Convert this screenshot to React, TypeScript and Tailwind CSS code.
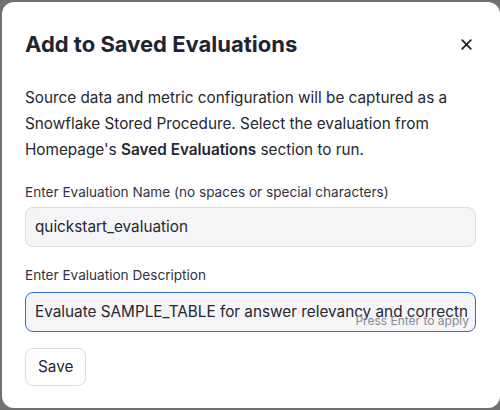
import React from "react";

export default function App() {
  return (
    <div className="w-[500px] h-[410px] bg-[#707070] overflow-hidden pt-[2px] pl-[2px]" style={{ fontFamily: "Inter, 'Noto Sans', sans-serif" }}>
      <div className="w-[498px] h-[406px] bg-white rounded-[12px] px-[23px] pt-[26px] text-[#262730]">
        <div className="flex items-center justify-between">
          <h2 className="text-[22px] font-bold text-[#1f2430] leading-[32px]">Add to Saved Evaluations</h2>
          <svg width="11" height="11" viewBox="0 0 11 11" className="mr-[5px]">
            <path d="M1.2 1.2 L9.8 9.8 M9.8 1.2 L1.2 9.8" stroke="#1f2430" strokeWidth="1.8" strokeLinecap="round" />
          </svg>
        </div>
        <p className="mt-[25px] text-[15.3px] leading-[26px] text-[#262730]">
          Source data and metric configuration will be captured as a Snowflake Stored Procedure. Select the evaluation from Homepage's <b className="font-semibold">Saved Evaluations</b> section to run.
        </p>
        <div className="mt-[19px] text-[13.6px] leading-[20px] text-[#31333f]">Enter Evaluation Name (no spaces or special characters)</div>
        <div className="mt-[5px] w-[451px] h-[40px] rounded-[8px] border border-[#dcdde2] bg-[#f5f5f7] flex items-center pl-[9px] text-[15.3px] text-[#262730]">
          quickstart_evaluation
        </div>
        <div className="mt-[18px] text-[13.6px] leading-[20px] text-[#31333f]">Enter Evaluation Description</div>
        <div className="relative mt-[7px] w-[451px] h-[40px] rounded-[8px] border border-[#2d6be0] bg-[#f5f5f7] flex items-center pl-[9px] pr-[8px] text-[15.3px] text-[#262730]">
          <span className="flex-1 overflow-hidden whitespace-nowrap">Evaluate SAMPLE_TABLE for answer relevancy and correctness</span>
          <span className="absolute right-[6px] bottom-[2px] text-[12px] leading-[16px] text-[#8a8b92]">Press Enter to apply</span>
        </div>
        <button className="mt-[16px] h-[38px] px-[12px] rounded-[8px] border border-[#dcdde2] bg-white text-[15.3px] text-[#262730]">Save</button>
      </div>
    </div>
  );
}
